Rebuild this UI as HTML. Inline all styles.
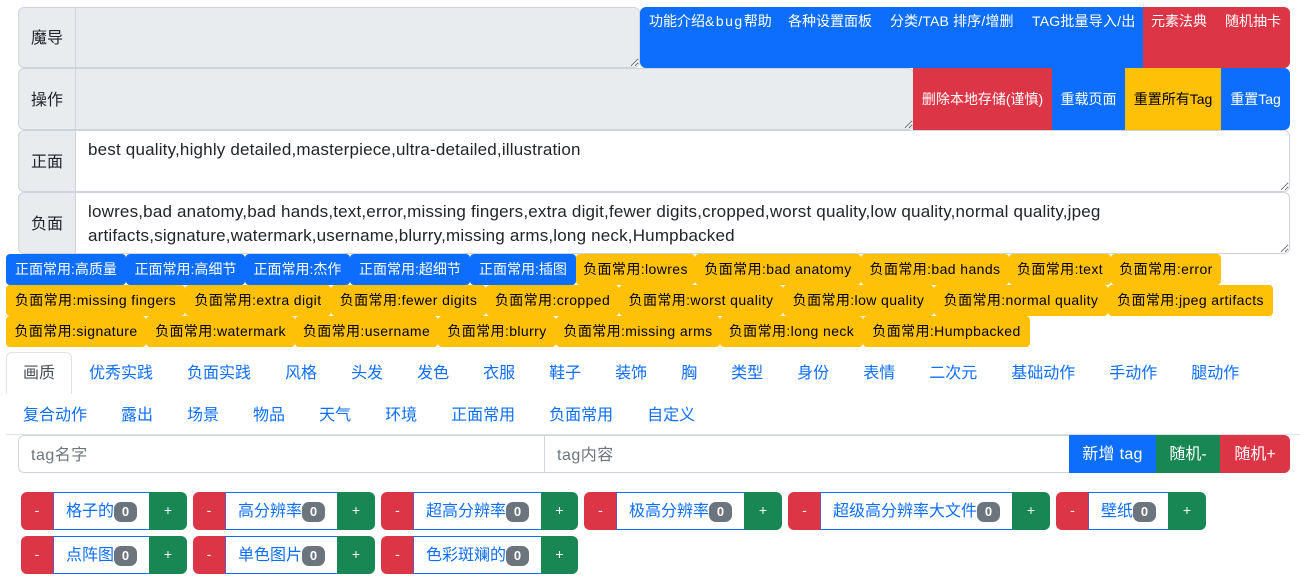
<!DOCTYPE html>
<html lang="zh"><head><meta charset="utf-8"><style>
*{box-sizing:border-box}
html,body{margin:0;padding:0;width:1300px;height:587px;overflow:hidden;background:#fff}
body{position:relative;font-family:"Liberation Sans","Noto Sans CJK SC",sans-serif;color:#212529;font-size:16px}
.a{position:absolute}
.lab{position:absolute;left:18px;width:58px;background:#e9ecef;border:1px solid #ced4da;border-radius:6px 0 0 6px;text-align:center;font-size:16px;display:flex;align-items:center;justify-content:center;padding-bottom:2px}
textarea{position:absolute;left:75px;margin:0;border:1px solid #ced4da;border-radius:0 6px 6px 0;padding:7px 12px 5px;font:17px/24px "Liberation Sans","Noto Sans CJK SC",sans-serif;letter-spacing:.19px;color:#212529;overflow:hidden;white-space:pre;outline:0;resize:vertical}
textarea.d{background:#e9ecef}
.b{position:absolute;font-size:14px;color:#fff;display:flex;justify-content:center;white-space:nowrap;line-height:21px}
.bl{background:#0d6efd}.re{background:#dc3545}.ye{background:#ffc107;color:#000}.gr{background:#198754}
.l{letter-spacing:1.5px}
.t{position:absolute;font-size:14px;height:31px;line-height:30px;text-align:center;white-space:nowrap;border-radius:4px;color:#fff}
.t.ye{color:#000;letter-spacing:.4px}
ul{position:absolute;left:6px;top:352px;width:1294px;margin:0;padding:0;list-style:none;display:flex;flex-wrap:wrap}
li a{display:block;padding:9px 16px 7px;line-height:24px;border:1px solid transparent;color:#0d6efd;font-size:16px}
li a.on{color:#495057;border-color:#dee2e6 #dee2e6 #fff;border-radius:6px 6px 0 0;background:#fff}
input{position:absolute;top:435px;height:38px;margin:0;border:1px solid #ced4da;padding:8px 12px 4px;font:16px/24px "Liberation Sans","Noto Sans CJK SC",sans-serif;outline:0;background:#fff}
input::placeholder{color:#6c757d;opacity:1;letter-spacing:.5px}
.g{position:absolute;height:38px;font-size:14px}
.g i{position:absolute;top:0;height:38px;font-style:normal;color:#fff;text-align:center;line-height:37px;font-size:14px}
.g .m{left:0;background:#dc3545;border-radius:6px 0 0 6px}
.g .p{background:#198754;border-radius:0 6px 6px 0}
.g .w{position:absolute;top:0;height:38px;border:1px solid #0d6efd;border-right:0;border-left-color:#6a55b8;background:#fff;color:#0d6efd;font-size:16px;line-height:38px;white-space:nowrap}
.g .w span{position:absolute;left:12px;top:0}
.g .w em{position:absolute;top:9px;width:23px;height:20px;border-radius:7px;background:#6c757d;color:#fff;font:bold 13px/20px "Liberation Sans",sans-serif;text-align:center}
</style></head><body>
<div class="lab" style="top:7px;height:61px;padding-bottom:3px">魔导</div>
<textarea class="d a" style="top:7px;width:565px;height:61px;resize:both" disabled></textarea>
<div class="b bl" style="left:640px;top:7px;width:503px;height:61px;border-radius:6px 0 0 6px;justify-content:flex-start">
<span class="a" style="left:9px;top:4px">功能介绍<span class="l">&amp;bug</span>帮助</span><span class="a" style="left:148px;top:4px">各种设置面板</span><span class="a" style="left:250px;top:4px;letter-spacing:.15px">分类/TAB 排序/增删</span><span class="a" style="left:392px;top:4px;letter-spacing:.2px">TAG批量导入/出</span></div>
<div class="b re" style="left:1143px;top:7px;width:147px;height:61px;border-radius:0 6px 6px 0">
<span class="a" style="left:8px;top:4px">元素法典</span><span class="a" style="left:82px;top:4px">随机抽卡</span></div>

<div class="lab" style="top:68px;height:62px">操作</div>
<textarea class="d a" style="top:68px;width:839px;height:62px" disabled></textarea>
<div class="b re" style="left:913px;top:68px;width:139px;height:62px;align-items:center">删除本地存储(谨慎)</div>
<div class="b bl" style="left:1052px;top:68px;width:73px;height:62px;align-items:center">重载页面</div>
<div class="b ye" style="left:1125px;top:68px;width:96px;height:62px;align-items:center">重置所有Tag</div>
<div class="b bl" style="left:1221px;top:68px;width:69px;height:62px;align-items:center;border-radius:0 6px 6px 0">重置Tag</div>

<div class="lab" style="top:130px;height:62px">正面</div>
<textarea class="a" style="top:130px;width:1215px;height:62px">best quality,highly detailed,masterpiece,ultra-detailed,illustration</textarea>
<div class="lab" style="top:192px;height:62px">负面</div>
<textarea class="a" style="top:192px;width:1215px;height:62px">lowres,bad anatomy,bad hands,text,error,missing fingers,extra digit,fewer digits,cropped,worst quality,low quality,normal quality,jpeg
artifacts,signature,watermark,username,blurry,missing arms,long neck,Humpbacked</textarea>

<div class="t bl" style="left:6px;top:254px;width:120px">正面常用:高质量</div>
<div class="t bl" style="left:126px;top:254px;width:119px">正面常用:高细节</div>
<div class="t bl" style="left:245px;top:254px;width:105px">正面常用:杰作</div>
<div class="t bl" style="left:350px;top:254px;width:120px">正面常用:超细节</div>
<div class="t bl" style="left:470px;top:254px;width:106px">正面常用:插图</div>
<div class="t ye" style="left:576px;top:254px;width:119px">负面常用:lowres</div>
<div class="t ye" style="left:695px;top:254px;width:166px">负面常用:bad anatomy</div>
<div class="t ye" style="left:861px;top:254px;width:148px">负面常用:bad hands</div>
<div class="t ye" style="left:1009px;top:254px;width:102px">负面常用:text</div>
<div class="t ye" style="left:1111px;top:254px;width:110px">负面常用:error</div>

<div class="t ye" style="left:6px;top:285px;width:179px">负面常用:missing fingers</div>
<div class="t ye" style="left:185px;top:285px;width:146px">负面常用:extra digit</div>
<div class="t ye" style="left:331px;top:285px;width:155px">负面常用:fewer digits</div>
<div class="t ye" style="left:486px;top:285px;width:133px">负面常用:cropped</div>
<div class="t ye" style="left:619px;top:285px;width:164px">负面常用:worst quality</div>
<div class="t ye" style="left:783px;top:285px;width:151px">负面常用:low quality</div>
<div class="t ye" style="left:934px;top:285px;width:174px">负面常用:normal quality</div>
<div class="t ye" style="left:1108px;top:285px;width:165px">负面常用:jpeg artifacts</div>

<div class="t ye" style="left:6px;top:316px;width:140px">负面常用:signature</div>
<div class="t ye" style="left:146px;top:316px;width:149px">负面常用:watermark</div>
<div class="t ye" style="left:295px;top:316px;width:143px">负面常用:username</div>
<div class="t ye" style="left:438px;top:316px;width:118px">负面常用:blurry</div>
<div class="t ye" style="left:556px;top:316px;width:164px">负面常用:missing arms</div>
<div class="t ye" style="left:720px;top:316px;width:143px">负面常用:long neck</div>
<div class="t ye" style="left:863px;top:316px;width:167px">负面常用:Humpbacked</div>

<ul>
<li><a class="on">画质</a></li><li><a>优秀实践</a></li><li><a>负面实践</a></li><li><a>风格</a></li><li><a>头发</a></li><li><a>发色</a></li><li><a>衣服</a></li><li><a>鞋子</a></li><li><a>装饰</a></li><li><a>胸</a></li><li><a>类型</a></li><li><a>身份</a></li><li><a>表情</a></li><li><a>二次元</a></li><li><a>基础动作</a></li><li><a>手动作</a></li><li><a>腿动作</a></li><li><a>复合动作</a></li><li><a>露出</a></li><li><a>场景</a></li><li><a>物品</a></li><li><a>天气</a></li><li><a>环境</a></li><li><a>正面常用</a></li><li><a>负面常用</a></li><li><a>自定义</a></li>
</ul>
<div class="a" style="left:6px;top:434px;width:1294px;height:1px;background:#dee2e6"></div>

<input style="left:18px;width:527px;border-radius:6px 0 0 6px" placeholder="tag名字">
<input style="left:544px;width:526px" placeholder="tag内容">
<div class="b bl" style="left:1069px;top:435px;width:87px;height:38px;align-items:center;font-size:16px;letter-spacing:.3px">新增 tag</div>
<div class="b gr" style="left:1156px;top:435px;width:64px;height:38px;align-items:center;font-size:16px">随机-</div>
<div class="b re" style="left:1220px;top:435px;width:70px;height:38px;align-items:center;font-size:16px;border-radius:0 6px 6px 0">随机+</div>

<div class="g" style="left:21px;top:492px;width:166px"><i class="m" style="width:32px">-</i><div class="w" style="left:32px;width:96px"><span>格子的</span><em style="left:60px">0</em></div><i class="p" style="left:128px;width:38px">+</i></div>
<div class="g" style="left:193px;top:492px;width:182px"><i class="m" style="width:32px">-</i><div class="w" style="left:32px;width:112px"><span>高分辨率</span><em style="left:76px">0</em></div><i class="p" style="left:144px;width:38px">+</i></div>
<div class="g" style="left:381px;top:492px;width:197px"><i class="m" style="width:33px">-</i><div class="w" style="left:32px;width:128px"><span>超高分辨率</span><em style="left:92px">0</em></div><i class="p" style="left:160px;width:37px">+</i></div>
<div class="g" style="left:584px;top:492px;width:198px"><i class="m" style="width:33px">-</i><div class="w" style="left:32px;width:128px"><span>极高分辨率</span><em style="left:92px">0</em></div><i class="p" style="left:160px;width:38px">+</i></div>
<div class="g" style="left:788px;top:492px;width:262px"><i class="m" style="width:33px">-</i><div class="w" style="left:32px;width:192px"><span>超级高分辨率大文件</span><em style="left:156px">0</em></div><i class="p" style="left:224px;width:38px">+</i></div>
<div class="g" style="left:1056px;top:492px;width:150px"><i class="m" style="width:33px">-</i><div class="w" style="left:32px;width:80px"><span>壁纸</span><em style="left:44px">0</em></div><i class="p" style="left:112px;width:38px">+</i></div>
<div class="g" style="left:21px;top:536px;width:166px"><i class="m" style="width:32px">-</i><div class="w" style="left:32px;width:96px"><span>点阵图</span><em style="left:60px">0</em></div><i class="p" style="left:128px;width:38px">+</i></div>
<div class="g" style="left:193px;top:536px;width:182px"><i class="m" style="width:32px">-</i><div class="w" style="left:32px;width:112px"><span>单色图片</span><em style="left:76px">0</em></div><i class="p" style="left:144px;width:38px">+</i></div>
<div class="g" style="left:381px;top:536px;width:197px"><i class="m" style="width:33px">-</i><div class="w" style="left:32px;width:128px"><span>色彩斑斓的</span><em style="left:92px">0</em></div><i class="p" style="left:160px;width:37px">+</i></div>
</body></html>
